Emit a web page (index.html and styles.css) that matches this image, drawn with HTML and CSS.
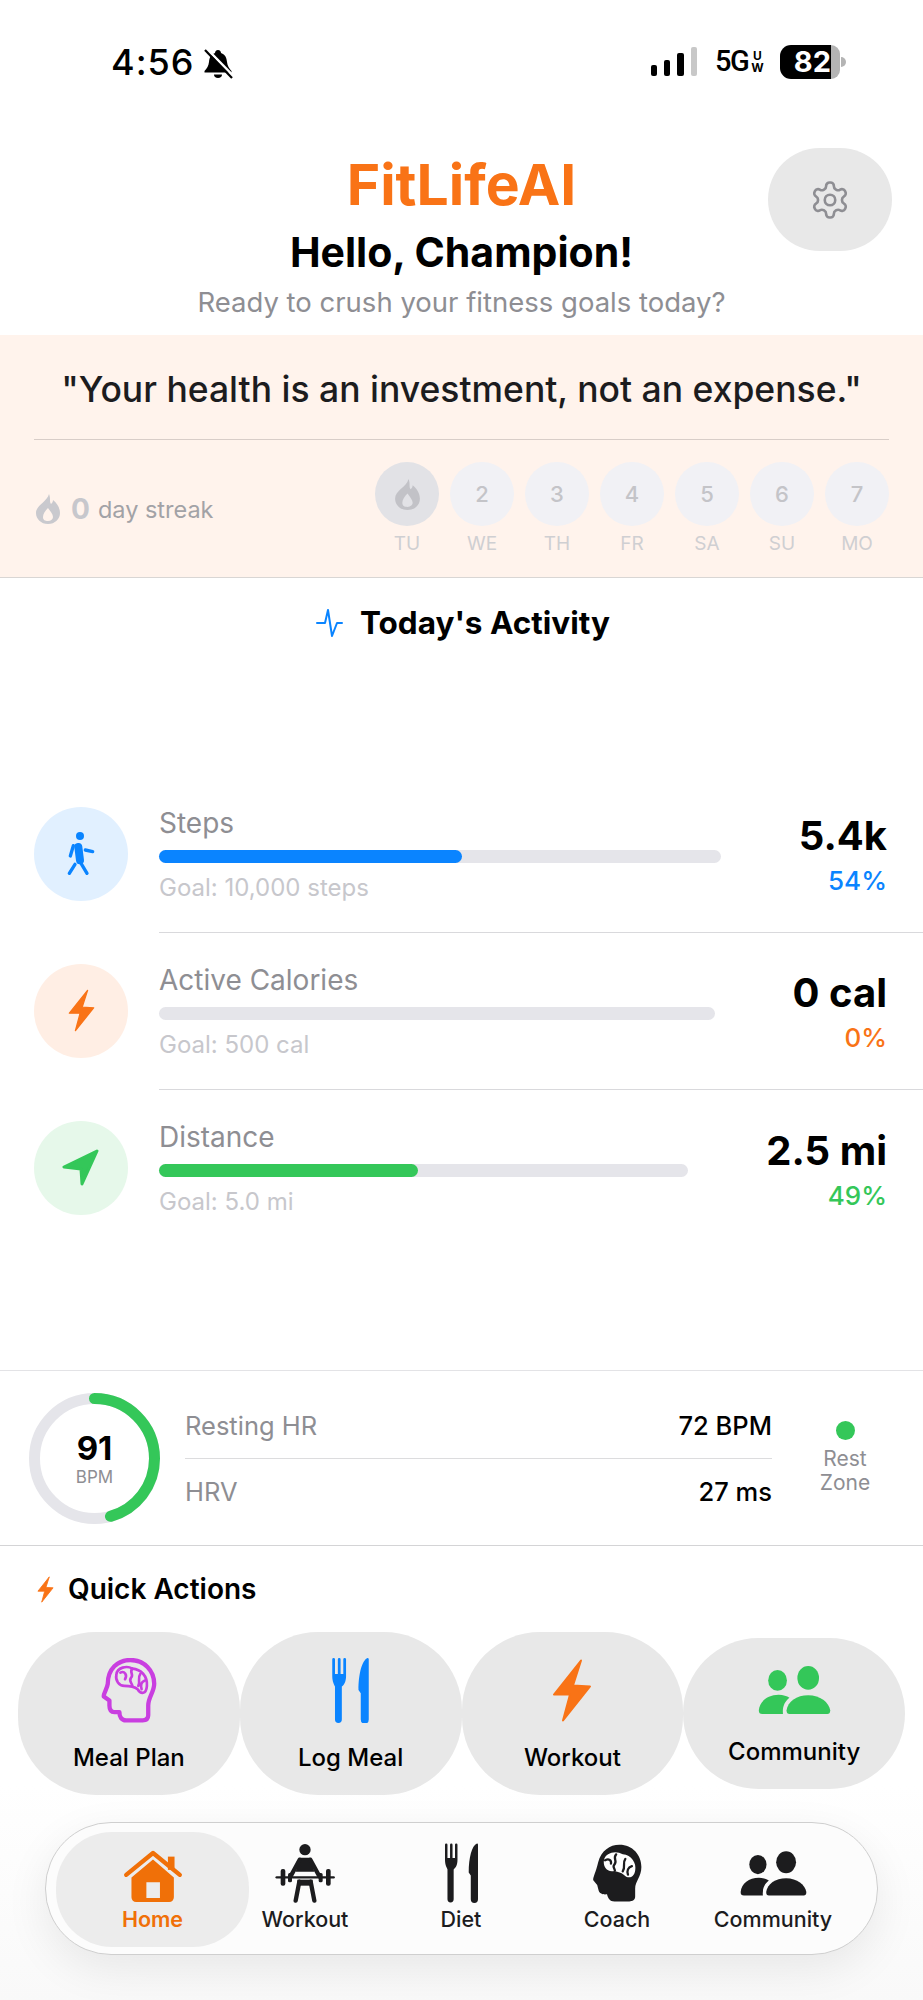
FILE: index.html
```html
<!DOCTYPE html>
<html lang="en">
<head>
    <meta charset="UTF-8">
    <meta name="viewport" content="width=device-width, initial-scale=1.0">
    <title>FitLifeAI</title>
    <link rel="stylesheet" href="styles.css">
</head>
<body>
<div class="screen">
    <div class="status-bar">
        <div class="status-left">
            <span class="time">4:56</span>
            <svg class="bell" viewBox="0 0 30 30">
                <path d="M15 1c-2 0-3 1.500-3 3C7.500 5.500 6.500 9 6 13c-.5 4-2 6.500-4.500 9v1.500h27V22c-2.500-2.500-4-5-4.500-9-.5-4-1.500-7.500-6-9 0-1.500-1-3-3-3z" fill="#000"/>
                <path d="M11 25.500h8c0 2-1.500 3.500-4 3.500s-4-1.500-4-3.500z" fill="#000"/>
                <path d="M3.500 -.5L31 27.500" stroke="#fff" stroke-width="2.500"/>
                <path d="M2 1L29 29" stroke="#000" stroke-width="2.200"/>
            </svg>
        </div>
        <div class="status-right">
            <div class="signal">
                <span class="sig-bar b1"></span>
                <span class="sig-bar b2"></span>
                <span class="sig-bar b3"></span>
                <span class="sig-bar b4"></span>
            </div>
            <div class="network">
                <span class="net-main">5G</span>
                <span class="net-sub"><span>U</span><span>W</span></span>
            </div>
            <div class="battery">
                <span class="battery-level">82</span>
                <span class="battery-rest"></span>
                <span class="battery-nub"></span>
            </div>
        </div>
    </div>

    <header class="header">
        <h1 class="brand">FitLifeAI</h1>
        <h2 class="hello">Hello, Champion!</h2>
        <p class="ready">Ready to crush your fitness goals today?</p>
        <button class="settings">
            <svg viewBox="0 0 24 24" width="42" height="42" fill="none" stroke="#8e8e93" stroke-width="1.500" stroke-linecap="round" stroke-linejoin="round">
                <path d="M12.220 2h-.44a2 2 0 0 0-2 2v.18a2 2 0 0 1-1 1.730l-.43.25a2 2 0 0 1-2 0l-.15-.08a2 2 0 0 0-2.730.73l-.22.38a2 2 0 0 0 .73 2.730l.15.1a2 2 0 0 1 1 1.720v.51a2 2 0 0 1-1 1.740l-.15.09a2 2 0 0 0-.73 2.730l.22.38a2 2 0 0 0 2.730.73l.15-.08a2 2 0 0 1 2 0l.43.25a2 2 0 0 1 1 1.730V20a2 2 0 0 0 2 2h.44a2 2 0 0 0 2-2v-.18a2 2 0 0 1 1-1.730l.43-.25a2 2 0 0 1 2 0l.15.08a2 2 0 0 0 2.730-.73l.22-.39a2 2 0 0 0-.73-2.730l-.15-.08a2 2 0 0 1-1-1.740v-.5a2 2 0 0 1 1-1.740l.15-.09a2 2 0 0 0 .73-2.730l-.22-.38a2 2 0 0 0-2.730-.73l-.15.08a2 2 0 0 1-2 0l-.43-.25a2 2 0 0 1-1-1.730V4a2 2 0 0 0-2-2z"/>
                <circle cx="12" cy="12" r="3"/>
            </svg>
        </button>
    </header>

    <section class="banner">
        <p class="quote">"Your health is an investment, not an expense."</p>
        <div class="streak-row">
            <div class="streak">
                <svg class="streak-flame" viewBox="0 0 24 30">
                    <path fill-rule="evenodd" d="M13 0c2 5 0 7 2 10 1-1 2-2 2-4 4 3 7 8 7 13 0 6-5 11-12 11S0 25 0 19C0 11 11 8 13 0zM12 14c-3 3-5 6-5 9 0 3 2 4 5 4s5-2 5-4c0-3-3-6-5-9z" fill="#c9c9ce"/>
                </svg>
                <span class="streak-num">0</span>
                <span class="streak-text">day streak</span>
            </div>
            <div class="days">
                <div class="day">
                    <div class="day-circle today">
                        <svg viewBox="0 0 24 30" width="25" height="31">
                            <path fill-rule="evenodd" d="M13 0c2 5 0 7 2 10 1-1 2-2 2-4 4 3 7 8 7 13 0 6-5 11-12 11S0 25 0 19C0 11 11 8 13 0zM12 14c-3 3-5 6-5 9 0 3 2 4 5 4s5-2 5-4c0-3-3-6-5-9z" fill="#c2c2c7"/>
                        </svg>
                    </div>
                    <span class="day-label">TU</span>
                </div>
                <div class="day"><div class="day-circle">2</div><span class="day-label">WE</span></div>
                <div class="day"><div class="day-circle">3</div><span class="day-label">TH</span></div>
                <div class="day"><div class="day-circle">4</div><span class="day-label">FR</span></div>
                <div class="day"><div class="day-circle">5</div><span class="day-label">SA</span></div>
                <div class="day"><div class="day-circle">6</div><span class="day-label">SU</span></div>
                <div class="day"><div class="day-circle">7</div><span class="day-label">MO</span></div>
            </div>
        </div>
    </section>

    <h3 class="activity-title">
        <svg viewBox="0 0 27 28" width="27" height="28" fill="none" stroke="#0a84ff" stroke-width="2" stroke-linejoin="round" stroke-linecap="round">
            <polyline points="1,14 9,14 12,1 16,27 21,14 26,14"/>
        </svg>
        Today's Activity
    </h3>

    <div class="metrics">
        <div class="metric">
            <div class="metric-icon blue-bg">
                <svg viewBox="110 90 90 135" width="30" height="45">
                    <circle cx="152" cy="105" r="12" fill="#0a84ff"/>
                    <path d="M147 138L152 178" stroke="#0a84ff" stroke-width="24" stroke-linecap="round"/>
                    <path d="M132 134L123 165M168 147L190 152M152 182L173 217M137 190L120 217" stroke="#0a84ff" stroke-width="10" stroke-linecap="round" fill="none"/>
                </svg>
            </div>
            <div class="metric-body">
                <div class="metric-info">
                    <div class="metric-label">Steps</div>
                    <div class="bar"><div class="bar-fill blue" style="width:54%"></div></div>
                    <div class="metric-goal">Goal: 10,000 steps</div>
                </div>
                <div class="metric-value">
                    <div class="value">5.4k</div>
                    <div class="percent blue-text">54%</div>
                </div>
            </div>
        </div>
        <div class="metric">
            <div class="metric-icon orange-bg">
                <svg viewBox="-1 -1 40 64" width="27" height="43">
                    <path d="M28 1L1 35L17 35L10 61L37 27L20 26Z" fill="#f97316" stroke="#f97316" stroke-width="2" stroke-linejoin="round"/>
                </svg>
            </div>
            <div class="metric-body">
                <div class="metric-info">
                    <div class="metric-label">Active Calories</div>
                    <div class="bar"></div>
                    <div class="metric-goal">Goal: 500 cal</div>
                </div>
                <div class="metric-value">
                    <div class="value">0 cal</div>
                    <div class="percent orange-text">0%</div>
                </div>
            </div>
        </div>
        <div class="metric last">
            <div class="metric-icon green-bg">
                <svg viewBox="0 0 38 37" width="38" height="37">
                    <path d="M35 2L2 18L19 20L20 35Z" fill="#34c759" stroke="#34c759" stroke-width="3" stroke-linejoin="round"/>
                </svg>
            </div>
            <div class="metric-body">
                <div class="metric-info">
                    <div class="metric-label">Distance</div>
                    <div class="bar"><div class="bar-fill green" style="width:49%"></div></div>
                    <div class="metric-goal">Goal: 5.0 mi</div>
                </div>
                <div class="metric-value">
                    <div class="value">2.5 mi</div>
                    <div class="percent green-text">49%</div>
                </div>
            </div>
        </div>
    </div>

    <section class="heart">
        <div class="ring">
            <svg viewBox="0 0 131 131" width="131" height="131" fill="none">
                <circle cx="65.500" cy="65.500" r="60" stroke="#e5e5ea" stroke-width="11"/>
                <circle cx="65.500" cy="65.500" r="60" stroke="#34c759" stroke-width="11" stroke-linecap="round" stroke-dasharray="172 377" transform="rotate(-90 65.500 65.500)"/>
            </svg>
            <div class="ring-text">
                <span class="ring-num">91</span>
                <span class="ring-unit">BPM</span>
            </div>
        </div>
        <div class="heart-rows">
            <div class="heart-row"><span>Resting HR</span><b>72 BPM</b></div>
            <div class="heart-row"><span>HRV</span><b>27 ms</b></div>
        </div>
        <div class="zone">
            <span class="zone-dot"></span>
            <span class="zone-text">Rest<br>Zone</span>
        </div>
    </section>

    <h3 class="quick-title">
        <svg viewBox="-1 -1 40 64" width="17" height="27">
            <path d="M28 1L1 35L17 35L10 61L37 27L20 26Z" fill="#f97316" stroke="#f97316" stroke-width="2" stroke-linejoin="round"/>
        </svg>
        Quick Actions
    </h3>

    <div class="actions">
        <div class="action">
            <svg class="action-icon" viewBox="28 22 172 196" width="58" height="65" fill="none" stroke="#c93ee0" stroke-linejoin="round" stroke-linecap="round">
                <path stroke-width="13" d="M50 100C50 55 80 28 118 28C160 28 190 60 190 100C190 125 172 140 172 165V195C172 205 165 210 155 210H105C92 210 85 200 85 185H70C58 185 55 175 55 165V150L38 138C36 130 48 115 50 100Z"/>
                <path stroke-width="8" d="M76 72C78 50 108 44 124 54C150 56 170 76 168 106C166 132 150 132 140 116C128 106 114 106 100 106C84 106 72 90 76 72Z"/>
                <path stroke-width="8" d="M88 66C100 60 110 72 102 86M124 54C114 66 130 72 120 82C112 92 124 98 124 106M148 70C138 84 150 92 142 106M162 90C152 94 148 104 152 116"/>
            </svg>
            <span class="action-label">Meal Plan</span>
        </div>
        <div class="action">
            <svg class="action-icon" viewBox="0 0 32 57" width="37" height="65" fill="#0a84ff">
                <path d="M0 1.200a1.100 1.100 0 0 1 2.400 0V14h2.500V1.200a1.100 1.100 0 0 1 2.400 0V14h2.400V1.200a1.100 1.100 0 0 1 2.400 0V16c0 5-2 8-3.700 9v29a3 3 0 0 1-6 0V25C2 24 0 21 0 16z"/>
                <path d="M31 0c.6 0 1 .5 1 1.200v52.800a3.500 3.500 0 0 1-7 0V31l-2-3C23 14 26 2 31 0z"/>
            </svg>
            <span class="action-label">Log Meal</span>
        </div>
        <div class="action">
            <svg class="action-icon" viewBox="-1 -1 40 64" width="40" height="65">
                <path d="M28 1L1 35L17 35L10 61L37 27L20 26Z" fill="#f97316" stroke="#f97316" stroke-width="2" stroke-linejoin="round"/>
            </svg>
            <span class="action-label">Workout</span>
        </div>
        <div class="action">
            <svg class="action-icon" viewBox="505 45 208 140" width="75" height="53" fill="#34c759">
                <ellipse cx="562" cy="87" rx="26" ry="29"/>
                <ellipse cx="647" cy="80" rx="30" ry="33"/>
                <path d="M510 170C512 145 535 127 565 127C578 127 588 131 595 135C582 145 575 160 577 180H520C513 180 510 178 510 170Z"/>
                <path d="M587 170C590 145 615 128 647 128C680 128 705 148 708 170C708 178 705 180 700 180H595C590 180 587 178 587 170Z"/>
            </svg>
            <span class="action-label">Community</span>
        </div>
    </div>

    <div class="bottom-fade"></div>

    <nav class="tabbar">
        <div class="tab tab-home">
            <svg viewBox="35 35 180 160" width="60" height="53" fill="#f07008">
                <rect x="170" y="55" width="20" height="40"/>
                <path d="M44 110L125 44L206 110" fill="none" stroke="#f07008" stroke-width="13" stroke-linecap="round" stroke-linejoin="round"/>
                <path fill-rule="evenodd" d="M60 118L125 64L188 118V178A14 14 0 0 1 174 192H74A14 14 0 0 1 60 178ZM105 132V180H146V132Z"/>
            </svg>
            <span class="tab-label">Home</span>
        </div>
        <div class="tab-group">
            <div class="tab">
                <svg viewBox="500 22 180 180" width="60" height="60" fill="#1c1c1e">
                    <circle cx="590" cy="42" r="17"/>
                    <path d="M574 66H606L618 108H562Z"/>
                    <path d="M574 72L547 122M606 72L633 122" stroke="#1c1c1e" stroke-width="13" stroke-linecap="round" fill="none"/>
                    <path d="M505 125H676" stroke="#1c1c1e" stroke-width="7" stroke-linecap="round"/>
                    <rect x="517" y="100" width="14" height="50" rx="6"/>
                    <rect x="653" y="100" width="14" height="50" rx="6"/>
                    <rect x="539" y="112" width="12" height="28" rx="5"/>
                    <rect x="631" y="112" width="12" height="28" rx="5"/>
                    <path d="M567 132H613V150H567Z"/>
                    <path d="M573 138L562 195M607 138L618 195" stroke="#1c1c1e" stroke-width="13" stroke-linecap="round" fill="none"/>
                </svg>
                <span class="tab-label">Workout</span>
            </div>
            <div class="tab">
                <svg viewBox="0 0 32 57" width="33" height="60" fill="#1c1c1e">
                    <path d="M0 1.200a1.100 1.100 0 0 1 2.400 0V14h2.500V1.200a1.100 1.100 0 0 1 2.400 0V14h2.400V1.200a1.100 1.100 0 0 1 2.400 0V16c0 5-2 8-3.700 9v29a3 3 0 0 1-6 0V25C2 24 0 21 0 16z"/>
                    <path d="M31 0c.6 0 1 .5 1 1.200v52.800a3.500 3.500 0 0 1-7 0V31l-2-3C23 14 26 2 31 0z"/>
                </svg>
                <span class="tab-label">Diet</span>
            </div>
            <div class="tab">
                <svg viewBox="60 22 165 182" width="54" height="60">
                    <path fill="#1c1c1e" d="M85 80C95 45 120 27 150 27C190 27 217 58 217 95C217 125 198 140 198 160V185C198 195 190 200 180 200H135C120 200 115 190 112 178C100 180 88 176 86 165L82 150L70 135C68 128 78 110 85 80Z"/>
                    <path fill="#fff" d="M103 72C108 52 138 42 160 56C187 58 203 84 198 106C194 130 174 130 163 118C154 112 148 110 134 107C113 112 98 94 103 72Z"/>
                    <path fill="none" stroke="#1c1c1e" stroke-width="7" stroke-linecap="round" d="M140 56C128 70 146 76 134 88C128 94 136 100 136 106M168 70C158 84 170 92 160 108M188 92C176 96 172 106 176 118M106 74C118 68 126 74 124 84"/>
                </svg>
                <span class="tab-label">Coach</span>
            </div>
            <div class="tab">
                <svg viewBox="505 35 208 155" width="69" height="60" fill="#1c1c1e">
                    <ellipse cx="562" cy="87" rx="26" ry="29"/>
                    <ellipse cx="647" cy="80" rx="30" ry="33"/>
                    <path d="M510 170C512 145 535 127 565 127C578 127 588 131 595 135C582 145 575 160 577 180H520C513 180 510 178 510 170Z"/>
                    <path d="M587 170C590 145 615 128 647 128C680 128 705 148 708 170C708 178 705 180 700 180H595C590 180 587 178 587 170Z"/>
                </svg>
                <span class="tab-label">Community</span>
            </div>
        </div>
    </nav>
</div>
</body>
</html>
```

FILE: styles.css
```css
* {
    box-sizing: border-box;
}
body {
    margin: 0;
    background-color: #ffffff;
    color: #000;
    font-family: Inter, "Liberation Sans", sans-serif;
}
.screen {
    position: relative;
    width: 923px;
    height: 2000px;
    overflow: hidden;
}
h1, h2, h3, p {
    margin: 0;
}

/* status bar */
.status-bar {
    height: 124px;
    display: flex;
    justify-content: space-between;
    padding: 44px 77px 0 111px;
}
.status-left {
    display: flex;
    align-items: flex-start;
    gap: 9px;
}
.time {
    font-size: 36px;
    line-height: 36px;
    font-weight: 500;
    letter-spacing: 1px;
}
.bell {
    width: 30px;
    height: 30px;
    margin-top: 5px;
}
.status-right {
    display: flex;
    align-items: flex-start;
}
.signal {
    display: flex;
    align-items: flex-end;
    gap: 7px;
    height: 30px;
    margin-top: 2px;
}
.sig-bar {
    width: 6px;
    background: #000;
    border-radius: 2px;
}
.b1 { height: 11px; }
.b2 { height: 16px; }
.b3 { height: 23px; width: 7px; }
.b4 { height: 29px; background: #c8c8c8; }
.network {
    display: flex;
    gap: 5px;
    margin-left: 18px;
}
.net-main {
    width: 32px;
    font-family: Roboto, sans-serif;
    font-size: 29px;
    line-height: 34px;
    font-weight: 500;
    letter-spacing: -1.500px;
    white-space: nowrap;
}
.net-sub {
    display: flex;
    flex-direction: column;
    align-items: center;
    width: 11px;
    font-size: 12px;
    line-height: 12px;
    font-weight: 700;
    margin-top: 6px;
}
.battery {
    display: flex;
    align-items: center;
    height: 34px;
    margin-left: 17px;
    margin-top: 1px;
}
.battery-level {
    width: 51px;
    height: 34px;
    background: #000;
    color: #fff;
    font-size: 29px;
    line-height: 34px;
    font-weight: 700;
    text-align: right;
    border-radius: 11px 0 0 11px;
}
.battery-rest {
    width: 9px;
    height: 34px;
    background: #b4b4b4;
    border-radius: 0 10px 10px 0;
}
.battery-nub {
    width: 5px;
    height: 10px;
    margin-left: 1px;
    background: #b4b4b4;
    border-radius: 0 5px 5px 0;
}

/* header */
.header {
    position: relative;
    height: 211px;
    padding-top: 26px;
    text-align: center;
}
.brand {
    color: #f97316;
    font-size: 57px;
    line-height: 70px;
    font-weight: 700;
}
.hello {
    margin-top: 7px;
    font-size: 41px;
    line-height: 50px;
    font-weight: 700;
}
.ready {
    margin-top: 8px;
    color: #8e8e93;
    font-size: 27.500px;
    line-height: 34px;
}
.settings {
    position: absolute;
    top: 24px;
    right: 31px;
    width: 124px;
    height: 103px;
    display: flex;
    align-items: center;
    justify-content: center;
    padding: 0;
    border: none;
    border-radius: 52px;
    background: #e8e8e8;
}

/* quote + streak */
.banner {
    height: 243px;
    padding: 35px 34px 0;
    background: #fff3ec;
    border-bottom: 1px solid #d9d6d4;
}
.quote {
    padding-bottom: 29px;
    color: #1c1c1e;
    font-size: 35.500px;
    line-height: 40px;
    font-weight: 500;
    text-align: center;
    white-space: nowrap;
    border-bottom: 1px solid #d8cdc8;
}
.streak-row {
    display: flex;
    justify-content: space-between;
    align-items: center;
    margin-top: 22px;
}
.streak {
    display: flex;
    align-items: center;
    margin-top: 1px;
}
.streak-flame {
    width: 24px;
    height: 30px;
    margin-left: 2px;
}
.streak-num {
    margin-left: 11px;
    color: #c7c7cc;
    font-size: 28px;
    font-weight: 700;
}
.streak-text {
    margin-left: 8px;
    color: #a2a2a6;
    font-size: 23.500px;
}
.days {
    display: flex;
    gap: 11px;
}
.day {
    display: flex;
    flex-direction: column;
    align-items: center;
    width: 64px;
}
.day-circle {
    width: 64px;
    height: 64px;
    display: flex;
    align-items: center;
    justify-content: center;
    border-radius: 50%;
    background: #f1f1f5;
    color: #c4c4c8;
    font-size: 22px;
    font-weight: 500;
}
.day-circle.today {
    background: #e2e2e6;
}
.day-label {
    margin-top: 7px;
    color: #cfcfd2;
    font-size: 19px;
    line-height: 22px;
}

/* activity */
.activity-title {
    display: flex;
    align-items: center;
    justify-content: center;
    gap: 17px;
    height: 40px;
    margin: 25px 0 133px;
    padding-left: 3px;
    font-size: 31.500px;
    line-height: 40px;
    font-weight: 700;
}
.metric {
    display: flex;
    align-items: center;
    height: 157px;
    padding-left: 34px;
}
.metric-icon {
    flex: none;
    width: 94px;
    height: 94px;
    margin-bottom: 2px;
    display: flex;
    align-items: center;
    justify-content: center;
    border-radius: 50%;
}
.blue-bg { background: #e1f0ff; }
.orange-bg { background: #ffeee4; }
.green-bg { background: #e6f8ea; }
.metric-body {
    flex: 1;
    height: 100%;
    display: flex;
    align-items: center;
    gap: 78px;
    margin-left: 31px;
    padding-right: 36px;
    border-bottom: 1px solid #d9d9dc;
}
.metric.last .metric-body {
    border-bottom: none;
}
.metric-info {
    flex: 1;
}
.metric-label {
    color: #8e8e93;
    font-size: 28px;
    line-height: 32px;
}
.bar {
    height: 13px;
    margin: 11px 0;
    border-radius: 7px;
    background: #e5e5ea;
}
.bar-fill {
    height: 100%;
    border-radius: 7px;
}
.blue { background: #0a84ff; }
.green { background: #34c759; }
.metric-goal {
    color: #c7c7cc;
    font-size: 24px;
    line-height: 28px;
}
.metric-value {
    text-align: right;
}
.value {
    font-size: 40px;
    line-height: 50px;
    font-weight: 700;
}
.percent {
    margin-top: 4px;
    font-size: 26px;
    line-height: 32px;
    font-weight: 500;
}
.blue-text { color: #0a84ff; }
.orange-text { color: #f97316; }
.green-text { color: #34c759; }

/* heart rate */
.heart {
    display: flex;
    align-items: center;
    height: 176px;
    margin-top: 123px;
    padding: 0 43px 0 29px;
    border-top: 1px solid #e3e3e6;
    border-bottom: 1px solid #d4d4d6;
}
.ring {
    position: relative;
    flex: none;
    width: 131px;
    height: 131px;
}
.ring-text {
    position: absolute;
    inset: 0;
    display: flex;
    flex-direction: column;
    align-items: center;
    justify-content: center;
}
.ring-num {
    font-size: 33px;
    line-height: 38px;
    font-weight: 700;
}
.ring-unit {
    color: #8e8e93;
    font-size: 17px;
    line-height: 20px;
}
.heart-rows {
    flex: 1;
    margin: 0 38px 0 25px;
}
.heart-row {
    display: flex;
    justify-content: space-between;
    align-items: center;
    height: 65px;
    color: #8e8e93;
    font-size: 25.500px;
}
.heart-row:first-child {
    height: 66px;
    border-bottom: 1px solid #dcdcde;
}
.heart-row b {
    color: #000;
    font-size: 25.500px;
    font-weight: 500;
}
.zone {
    display: flex;
    flex-direction: column;
    align-items: center;
    width: 70px;
}
.zone-dot {
    width: 19px;
    height: 19px;
    margin-bottom: 7px;
    border-radius: 50%;
    background: #34c759;
}
.zone-text {
    color: #8e8e93;
    font-size: 21px;
    line-height: 24px;
    text-align: center;
}

/* quick actions */
.quick-title {
    display: flex;
    align-items: center;
    gap: 14px;
    height: 86px;
    padding: 0 0 0 37px;
    font-size: 28px;
    font-weight: 600;
}
.actions {
    display: grid;
    grid-template-columns: repeat(4, 1fr);
    align-items: center;
    padding: 0 18px;
}
.action {
    display: flex;
    flex-direction: column;
    align-items: center;
    padding: 26px 0 23px;
    border-radius: 78px;
    background: #e8e8e8;
}
.action-icon {
    display: block;
}
.action-label {
    margin-top: 21px;
    font-size: 24px;
    line-height: 28px;
    font-weight: 500;
}

/* floating tab bar */
.bottom-fade {
    position: absolute;
    left: 0;
    right: 0;
    bottom: 0;
    height: 215px;
    background: linear-gradient(rgba(248, 248, 248, 0), #f9f9f9);
}
.tabbar {
    position: absolute;
    left: 45px;
    top: 1822px;
    width: 833px;
    height: 133px;
    display: flex;
    padding: 9px 0 0 10px;
    border: 1px solid #cfcfcf;
    border-radius: 66px;
    background: #fcfcfc;
    box-shadow: 0 14px 44px rgba(0, 0, 0, 0.08);
}
.tab {
    display: flex;
    flex-direction: column;
    align-items: center;
    justify-content: flex-end;
    width: 112px;
    height: 115px;
    padding-bottom: 15px;
}
.tab svg {
    flex: none;
    display: block;
}
.tab-home {
    width: 193px;
    border-radius: 56px;
    background: #ececec;
}
.tab-group {
    display: flex;
    gap: 44px;
}
.tab-label {
    margin-top: 3px;
    color: #1c1c1e;
    font-size: 21.500px;
    line-height: 26px;
    font-weight: 500;
    white-space: nowrap;
}
.tab-home .tab-label {
    color: #f07008;
    font-weight: 600;
}
```
